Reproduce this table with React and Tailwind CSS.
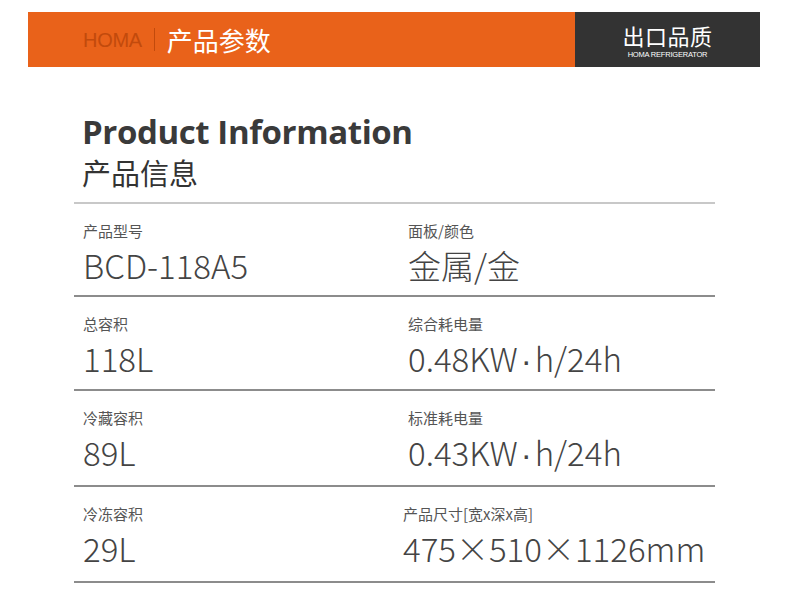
import React from "react";

const Dot = () => (
  <span className="mx-[3px]" style={{ fontFamily: '"Liberation Sans", sans-serif' }}>·</span>
);

const rows = [
  { l: "产品型号", v: "BCD-118A5", rl: "面板/颜色", rv: "金属/金", h: "h-[93px]" },
  { l: "总容积", v: "118L", rl: "综合耗电量", rv: <>0.48KW<Dot />h/24h</>, h: "h-[94px]" },
  { l: "冷藏容积", v: "89L", rl: "标准耗电量", rv: <>0.43KW<Dot />h/24h</>, h: "h-[96px]" },
  { l: "冷冻容积", v: "29L", rl: "产品尺寸[宽x深x高]", rv: "475×510×1126mm", h: "h-[96px]", shift: true },
];

const cjk = { fontFamily: '"Noto Sans CJK SC", "Noto Sans", sans-serif' };

export default function App() {
  return (
    <div className="w-[800px] h-[614px] bg-white overflow-hidden pt-[12px]" style={cjk}>
      {/* header bar */}
      <div className="ml-[28px] w-[732px] h-[55px] flex">
        <div className="flex-1 bg-[#e9621a] flex items-center pl-[55px]">
          <span className="text-[20px] text-[#c24a0c] tracking-[-0.3px]" style={{ fontFamily: '"Liberation Sans", sans-serif' }}>HOMA</span>
          <span className="w-[1px] h-[23px] bg-[#c24a0c] ml-[12px] mr-[12px]"></span>
          <span className="text-[26px] text-white leading-none">产品参数</span>
        </div>
        <div className="w-[185px] bg-[#333333] flex flex-col items-center justify-center pb-[1px]">
          <span className="text-[22px] text-white leading-[30px] tracking-[0.5px]">出口品质</span>
          <span className="text-[7.5px] text-white leading-[9px] tracking-[-0.2px]" style={{ fontFamily: '"Liberation Sans", sans-serif' }}>HOMA REFRIGERATOR</span>
        </div>
      </div>

      {/* title */}
      <div className="ml-[74px] w-[641px]">
        <div className="pl-[8px] pt-[45px]">
          <div className="text-[33px] font-bold text-[#3a3a3a] leading-[40px] tracking-[-0.4px]" style={{ fontFamily: '"Open Sans", sans-serif' }}>Product Information</div>
          <div className="text-[29px] text-[#333] leading-[38px] mt-[1px]">产品信息</div>
        </div>
        <div className="h-[2px] bg-[#c8c8c8] mt-[11px]"></div>

        {rows.map((r, i) => (
          <div key={i} className={`grid grid-cols-[334px_1fr] ${r.h} border-b-2 border-[#8c8c8c] pt-[16px]`}>
            <div className="pl-[9px]">
              <div className="text-[15px] text-[#555] leading-[22px]">{r.l}</div>
              <div className="text-[33px] font-light text-[#444] leading-[48px] -mt-[1px]">{r.v}</div>
            </div>
            <div className={r.shift ? "-ml-[5px]" : ""}>
              <div className="text-[15px] text-[#555] leading-[22px]">{r.rl}</div>
              <div className="text-[33px] font-light text-[#444] leading-[48px] -mt-[1px] whitespace-nowrap">{r.rv}</div>
            </div>
          </div>
        ))}
      </div>
    </div>
  );
}
